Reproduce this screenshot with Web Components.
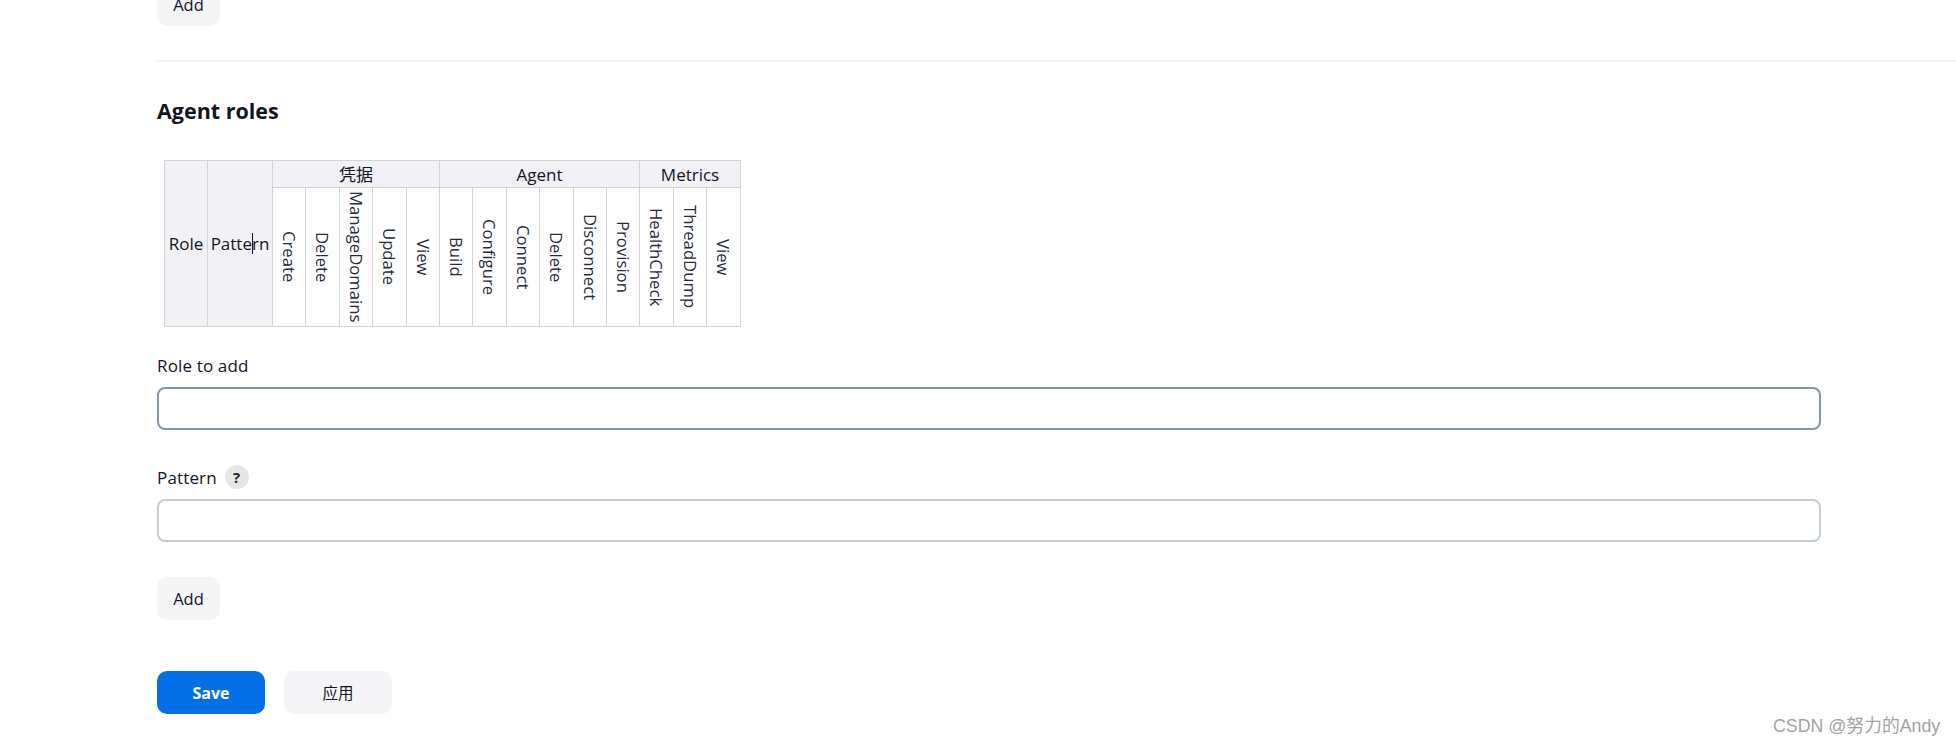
<!DOCTYPE html>
<html lang="zh">
<head>
<meta charset="utf-8">
<title>Agent roles</title>
<style>
    html, body {
        margin: 0;
        height: 745px;
        overflow: hidden;
        background: #fff;
        color: #14141f;
        font-family: "Open Sans", "Noto Sans CJK SC", sans-serif;
    }
</style>
</head>
<body>
<role-page></role-page>

<script>
const FONT_STACK = '"Open Sans", "Noto Sans CJK SC", sans-serif';

class JkButton extends HTMLElement {
    constructor() {
        super();
        this.attachShadow({ mode: 'open' });
        this.shadowRoot.innerHTML = `
            <style>
                :host {
                    display: flex;
                    justify-content: center;
                    align-items: center;
                    box-sizing: border-box;
                    height: 43px;
                    width: 63px;
                    border-radius: 10px;
                    background: #f5f5f8;
                    color: #14141f;
                    font-size: 16.5px;
                    font-weight: 400;
                }
                :host([wide]) {
                    width: 108px;
                    font-size: 15.5px;
                }
                :host([primary]) {
                    background: #0470e8;
                    color: #fff;
                    font-size: 16px;
                    font-weight: 700;
                }
            </style>
            <slot></slot>
        `;
    }
}

class PermissionTable extends HTMLElement {
    constructor() {
        super();
        this.attachShadow({ mode: 'open' });
        const groups = [
            { name: '凭据', items: ['Create', 'Delete', 'ManageDomains', 'Update', 'View'] },
            { name: 'Agent', items: ['Build', 'Configure', 'Connect', 'Delete', 'Disconnect', 'Provision'] },
            { name: 'Metrics', items: ['HealthCheck', 'ThreadDump', 'View'] },
        ];
        const widths = [43, 65, 33, 34, 33, 34, 33, 33, 34, 33, 34, 33, 33, 34, 33, 34];
        const cols = widths.map(w => `<col style="width:${w}px">`).join('');
        const groupCells = groups.map(g => `<th class="group" colspan="${g.items.length}">${g.name}</th>`).join('');
        const itemCells = groups.flatMap(g => g.items)
            .map(name => `<td class="perm"><span>${name}</span></td>`).join('');
        this.shadowRoot.innerHTML = `
            <style>
                :host {
                    display: block;
                    position: relative;
                    width: 577px;
                    margin-left: 7px;
                }
                table {
                    border-collapse: collapse;
                    table-layout: fixed;
                    width: 576px;
                    font-size: 17px;
                }
                th, td {
                    border: 1px solid #d4d4d2;
                    padding: 0;
                    text-align: center;
                    overflow: hidden;
                }
                th {
                    background: #f2f2f6;
                    font-weight: 400;
                    color: #14141f;
                }
                .group {
                    height: 25px;
                    padding-top: 1px;
                    line-height: 25px;
                }
                .perm {
                    height: 138px;
                    font-size: 16.7px;
                    font-weight: 400;
                    color: #2a2a3c;
                }
                .perm span {
                    writing-mode: vertical-rl;
                    display: inline-block;
                    vertical-align: middle;
                }
                .cursor {
                    position: absolute;
                    left: 88px;
                    top: 73px;
                    width: 1px;
                    height: 21px;
                    background: #14141f;
                }
            </style>
            <table>
                <colgroup>${cols}</colgroup>
                <tr>
                    <th rowspan="2">Role</th>
                    <th rowspan="2">Pattern</th>
                    ${groupCells}
                </tr>
                <tr>${itemCells}</tr>
            </table>
            <div class="cursor"></div>
        `;
    }
}

class FormField extends HTMLElement {
    constructor() {
        super();
        this.attachShadow({ mode: 'open' });
        const help = this.hasAttribute('help') ? '<span class="help">?</span>' : '';
        this.shadowRoot.innerHTML = `
            <style>
                :host {
                    display: block;
                    width: 1664px;
                }
                .label {
                    display: flex;
                    align-items: center;
                    gap: 8px;
                    height: 24px;
                    margin-bottom: 10px;
                    font-size: 17px;
                    letter-spacing: 0.15px;
                }
                .help {
                    display: inline-flex;
                    justify-content: center;
                    align-items: center;
                    width: 24px;
                    height: 24px;
                    border-radius: 50%;
                    background: #e6e6e6;
                    font-size: 15px;
                    font-weight: 700;
                    color: #222;
                }
                input {
                    display: block;
                    box-sizing: border-box;
                    width: 100%;
                    height: 43px;
                    margin: 0;
                    border: 2px solid #c3ced6;
                    border-radius: 8px;
                    background: #fff;
                    outline: none;
                    font: inherit;
                }
                :host([hovered]) input {
                    border-color: #8497a5;
                }
            </style>
            <div class="label"><span><slot></slot></span>${help}</div>
            <input type="text">
        `;
    }
}

class RolePage extends HTMLElement {
    constructor() {
        super();
        this.attachShadow({ mode: 'open' });
        this.shadowRoot.innerHTML = `
            <style>
                :host {
                    display: block;
                    position: relative;
                    height: 762px;
                    margin-top: -17px;
                    padding-left: 157px;
                    box-sizing: border-box;
                    font-family: ${FONT_STACK};
                }
                hr {
                    height: 2px;
                    border: 0;
                    margin: 34px 0 0;
                    background: #f3f3f7;
                }
                h2 {
                    margin: 34px 0 0;
                    height: 30px;
                    line-height: 30px;
                    font-size: 21.5px;
                    font-weight: 700;
                    color: #14141f;
                }
                permission-table {
                    margin-top: 34px;
                }
                form-field.first {
                    margin-top: 26px;
                }
                form-field.second {
                    margin-top: 35px;
                }
                .add-row {
                    margin-top: 35px;
                }
                .actions {
                    display: flex;
                    gap: 19px;
                    margin-top: 51px;
                }
                .watermark {
                    position: absolute;
                    left: 1773px;
                    top: 731px;
                    font-family: "Liberation Sans", "Noto Sans CJK SC", sans-serif;
                    font-size: 17.8px;
                    line-height: 24px;
                    color: #a3a3a3;
                    white-space: nowrap;
                }
            </style>
            <jk-button>Add</jk-button>
            <hr>
            <h2>Agent roles</h2>
            <permission-table></permission-table>
            <form-field class="first" hovered>Role to add</form-field>
            <form-field class="second" help>Pattern</form-field>
            <div class="add-row"><jk-button>Add</jk-button></div>
            <div class="actions">
                <jk-button primary wide>Save</jk-button>
                <jk-button wide>应用</jk-button>
            </div>
            <div class="watermark">CSDN @努力的Andy</div>
        `;
    }
}

customElements.define('jk-button', JkButton);
customElements.define('permission-table', PermissionTable);
customElements.define('form-field', FormField);
customElements.define('role-page', RolePage);
</script>
</body>
</html>
